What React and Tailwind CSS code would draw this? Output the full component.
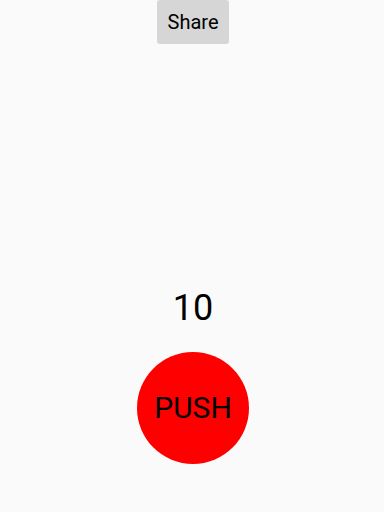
export default function App() {
  return (
    <div className="h-[512px] w-[384px] bg-[#fafafa] flex flex-col items-center pl-[2px]" style={{ fontFamily: "Roboto, sans-serif" }}>
      <button className="w-[72px] h-[44px] bg-[#d6d6d6] rounded-[3px] text-[20px] text-black leading-none flex items-center justify-center">
        Share
      </button>
      <div className="flex-1" />
      <div className="text-[36px] leading-none text-black h-[44px] flex items-center">10</div>
      <div className="mt-[22px] mb-[48px] w-[112px] h-[112px] rounded-full bg-[#ff0000] flex items-center justify-center text-[30px] text-black leading-none">
        PUSH
      </div>
    </div>
  );
}
